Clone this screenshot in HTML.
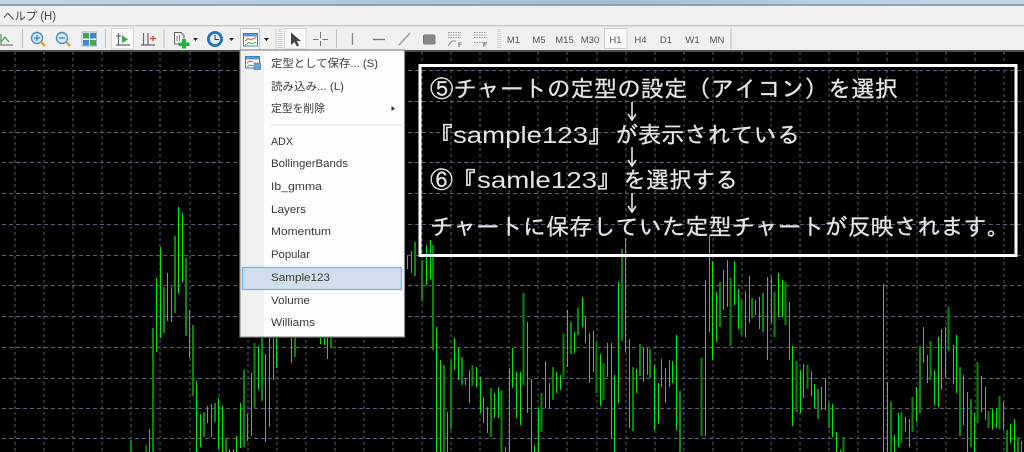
<!DOCTYPE html>
<html lang="ja">
<head>
<meta charset="utf-8">
<title>チャートの定型</title>
<style>
html,body{margin:0;padding:0;background:#000;width:1024px;height:452px;overflow:hidden}
svg{display:block}
.tb{font:9.5px "Liberation Sans",sans-serif;fill:#555}
.m{font:10.8px "Liberation Sans","Noto Sans CJK JP",sans-serif;fill:#3a3a3a}
.big{font-family:"IPAGothic","Noto Sans CJK JP",sans-serif;font-size:23px;fill:#e4e4e4;stroke:#e4e4e4;stroke-width:.3px}
.lat{font-family:"Liberation Sans",sans-serif;font-size:23px;fill:#e4e4e4}
</style>
</head>
<body>
<svg width="1024" height="452" viewBox="0 0 1024 452" xmlns="http://www.w3.org/2000/svg">
<defs>
<linearGradient id="ti" x1="0" x2="1" y1="0" y2="0">
<stop offset="0" stop-color="#c4d4e2"/><stop offset=".3" stop-color="#b4cbe0"/><stop offset=".6" stop-color="#a4bdd4"/><stop offset=".8" stop-color="#b8cfe4"/><stop offset="1" stop-color="#c4d6e6"/>
</linearGradient>
</defs>

<!-- chart -->
<rect x="0" y="52" width="1024" height="400" fill="#000"/>
<path fill="none" stroke="#566172" stroke-width="1" stroke-dasharray="3 3" d="M15 52V452M44 52V452M73 52V452M102 52V452M131 52V452M160 52V452M190 52V452M219 52V452M248 52V452M277 52V452M306 52V452M335 52V452M364 52V452M393 52V452M422 52V452M451 52V452M480 52V452M509 52V452M538 52V452M567 52V452M597 52V452M626 52V452M655 52V452M684 52V452M713 52V452M742 52V452M771 52V452M800 52V452M829 52V452M858 52V452M887 52V452M917 52V452M946 52V452M975 52V452M1004 52V452"/>
<path fill="none" stroke="#566172" stroke-width="1" stroke-dasharray="4 3" d="M2 70.5H1024M2 101.5H1024M2 132.5H1024M2 162.5H1024M2 193.5H1024M2 224.5H1024M2 255.5H1024M2 285.5H1024M2 316.5H1024M2 347.5H1024M2 378.5H1024M2 408.5H1024M2 438.5H1024"/>

<!-- dark bars -->
<path fill="none" stroke="#058a05" stroke-width="2" shape-rendering="crispEdges" d="M131 440V452M153 328V452M164 287V333M175 236V313M186 258V336M193 325V396M204 412V437M215 403V422M226 438V452M244 370V447M254.5 343V408M262 338V401M295 338V357M331 338V348M415 242V276M422 260V301M433 245V350M444 365V452M451 360V429M462 357V385M472.5 365V386M491 388V437M501.5 390V452M523.5 293V385M541.5 393V432M553 367V400M563.5 334V377M571 322V354M578 308V335M596.5 342V393M603.5 363V400M622 249V341M633 367V431M640 344V376M650 349V378M680 391V452M701.5 358V436M720 282V327M730.5 278V346M741.5 300V335M752 298V318M763 293V332M774.5 292V337M785.5 282V325M796.5 361V412M807.5 365V389M818 389V419M829 403V428M843.5 437V452M891 402V452M901.5 412V443M912.5 397V432M920 346V413M930.5 341V380M948.5 307V351M960 367V436M971 399V447M977.5 362V423M988.5 411V428M999.5 396V429M1007 430V452M1018 437V452"/>
<!-- bright bars -->
<path fill="none" stroke="#00ee00" stroke-width="1" shape-rendering="crispEdges" d="M146 445V452M149.5 429V452M156.5 278V352M160.500 247V338M167.5 273V321M171.5 287V322M178.5 207V294M182.500 213V282M189.5 310V358M196.5 381V452M200.5 414V447M207.5 406V423M211.500 404V437M218.5 398V449M222.500 406V452M229.5 449V452M233.500 449V452M236.5 436V452M240.5 403V448M247.5 414V441M251.500 373V436M258.5 346V390M265.5 354V442M269.5 338V427M273.500 338V380M276.5 338V368M291.500 338V363M320.500 338V344M324.500 338V345M327.5 338V359M407.500 255V269M411.500 251V273M426.500 245V285M430.500 240V279M436.5 327V452M440.5 360V452M447.5 412V452M454.5 338V370M458.5 348V380M465.5 378V385M469.500 370V403M476.5 367V387M480.500 377V413M483.5 397V423M487.500 407V433M494.5 393V418M498.500 387V418M505.500 447V452M509.500 368V452M512.500 348V388M516.500 372V418M520.500 372V425M527.5 322V413M531.500 379V452M534.500 445V452M538.500 408V452M545.5 361V408M549.500 383V408M556.500 372V393M560.500 375V390M567.500 310V367M574.500 332V353M582.500 297V327M585.5 317V343M589.500 333V383M593.500 331V372M600.500 354V406M607.5 343V377M611.500 343V438M614.5 375V452M618.5 282V403M625.5 238V352M629.500 339V428M636.5 369V393M643.5 347V382M647.500 348V375M654.5 365V430M658.500 383V424M661.5 359V387M665.5 368V403M669.500 360V387M672.5 361V383M676.500 335V430M705.500 280V436M709.500 236V332M712.5 261V360M716.500 292V342M723.5 270V310M727.500 260V307M734.500 261V305M738.500 289V329M745.500 291V337M749.500 276V323M755.5 300V315M759.5 297V329M767.500 277V360M771.500 277V323M778.500 273V317M782.500 280V317M789.500 302V360M792.500 346V426M800.500 370V413M803.5 364V398M811.500 371V396M814.5 384V408M821.5 387V410M825.5 378V410M832.5 404V437M836.5 432V452M840.500 450V452M883.500 284V452M887.5 382V452M894.5 435V452M898.500 413V447M905.500 417V432M909.500 419V447M916.500 387V422M923.5 327V363M927.500 355V383M934.5 370V405M938.500 337V407M941.5 329V390M945.5 327V378M953.500 345V384M956.5 335V393M963.5 375V425M967.500 392V452M974.500 413V452M981.5 376V412M985.500 387V420M992.500 409V430M996.500 408V428M1003.500 402V430M1010.5 424V443M1014.500 419V452M1021.500 441V452"/>

<!-- annotation frame -->
<rect x="420" y="65.5" width="596" height="190" fill="none" stroke="#fff" stroke-width="3"/>
<text class="big" x="430" y="97" textLength="468" lengthAdjust="spacingAndGlyphs">⑤チャートの定型の設定（アイコン）を選択</text>
<text class="big" x="430" y="143">『</text>
<text class="lat" x="453" y="143" textLength="135" lengthAdjust="spacingAndGlyphs">sample123</text>
<text class="big" x="588" y="143">』</text>
<text class="big" x="615" y="143" textLength="185" lengthAdjust="spacingAndGlyphs">が表示されている</text>
<text class="big" x="430" y="188">⑥</text>
<text class="big" x="453" y="188">『</text>
<text class="lat" x="477" y="188" textLength="120" lengthAdjust="spacingAndGlyphs">samle123</text>
<text class="big" x="597" y="188">』</text>
<text class="big" x="623" y="188" textLength="115" lengthAdjust="spacingAndGlyphs">を選択する</text>
<text class="big" x="430" y="235" textLength="580" lengthAdjust="spacingAndGlyphs">チャートに保存していた定型チャートが反映されます。</text>
<path fill="none" stroke="#e4e4e4" stroke-width="1.6" d="M632 102V120M628 114L632 120L636 114M632 147V166M628 160L632 166L636 160M632 193V212M628 206L632 212L636 206"/>

<!-- title sliver + menu bar + toolbar -->
<rect x="0" y="0" width="1024" height="5" fill="url(#ti)"/>
<rect x="0" y="4" width="1024" height="2" fill="#8fa3b6"/>
<rect x="0" y="6" width="1024" height="45" fill="#f0f0f0"/>
<rect x="0" y="25" width="1024" height="1.5" fill="#c9c9c9"/>
<rect x="0" y="50" width="1024" height="2" fill="#4a4a4a"/>
<text x="3" y="20" font-family="'Liberation Sans','Noto Sans CJK JP',sans-serif" font-size="11.5" fill="#444" textLength="53" lengthAdjust="spacingAndGlyphs">ヘルプ (H)</text>

<!-- toolbar separators -->
<path stroke="#c4c4c4" stroke-width="1.2" fill="none" d="M22.5 29V48M105.5 29V48M164 29V48M336.5 29V48M731 28V49"/>
<path stroke="#b8b8b8" stroke-width="1" stroke-dasharray="1 1" fill="none" d="M279 29V49M281 29V49M498 29V49M500 29V49"/>
<path stroke="#cfcfcf" stroke-width="1" fill="none" d="M276 29V49"/>

<!-- first partial icon -->
<path fill="none" stroke="#6b7f6b" stroke-width="1.2" d="M1 34V45H13"/>
<path fill="none" stroke="#3fa34f" stroke-width="1.2" d="M1 42L5 37L9 42"/>

<!-- zoom in -->
<circle cx="37" cy="38" r="5.5" fill="#d5e9f8" stroke="#4a8fc8" stroke-width="1.4"/>
<path stroke="#d9a93a" stroke-width="2.6" d="M41 42L45 46"/>
<path stroke="#2f7cc0" stroke-width="1.2" d="M34 38H40M37 35V41"/>
<!-- zoom out -->
<circle cx="62" cy="38" r="5.5" fill="#d5e9f8" stroke="#4a8fc8" stroke-width="1.4"/>
<path stroke="#d9a93a" stroke-width="2.6" d="M66 42L70 46"/>
<path stroke="#2f7cc0" stroke-width="1.2" d="M59 38H65"/>
<!-- tile -->
<rect x="82" y="32" width="14.5" height="14" fill="#fff" stroke="#6b8fae" stroke-width=".6"/>
<rect x="83" y="33" width="6" height="5.5" fill="#3fa64f"/><rect x="90" y="33" width="6" height="5.5" fill="#3f86cf"/>
<rect x="83" y="40" width="6" height="5.5" fill="#3f86cf"/><rect x="90" y="40" width="6" height="5.5" fill="#3fa64f"/>

<!-- axes buttons -->
<rect x="111.5" y="28.5" width="22" height="20.5" fill="#fafafa" stroke="#d6d6d6"/>
<path fill="none" stroke="#667" stroke-width="1.2" d="M118.5 33V45M116 45H130M116 36H121"/>
<path fill="#3aa84a" d="M122 35L128 39.5L122 43Z"/>
<path fill="none" stroke="#667" stroke-width="1.2" d="M143.5 33V45M141 45H155M148 33V45"/>
<path fill="none" stroke="#d2502f" stroke-width="1.4" d="M150 38.5H156M153 36V41"/>

<!-- new chart -->
<path fill="#f4f4f4" stroke="#666" stroke-width="1" d="M174.5 32.5H181L184 35.5V44H174.5Z"/>
<path fill="none" stroke="#888" d="M177 36V41M179.5 35V41"/>
<path fill="#22b33a" d="M182 39H186V42.5H189.5V46H186V48.5H182V46H178.5V42.5H182Z"/>
<path fill="#222" d="M193 38H198L195.5 41Z"/>
<!-- clock -->
<circle cx="215" cy="39" r="6.6" fill="#e8eef4" stroke="#2274bc" stroke-width="2.8"/>
<path fill="none" stroke="#335" stroke-width="1" d="M215 35V39.5H219"/>
<path fill="#222" d="M229 38H234L231.5 41Z"/>
<!-- template -->
<rect x="240.5" y="28.5" width="19" height="21.5" fill="#f7f7f7" stroke="#c8c8c8"/>
<rect x="243.5" y="33.5" width="14" height="12.5" fill="#fff" stroke="#3f7fb8"/>
<rect x="244" y="34" width="13" height="2.5" fill="#5a9ad4"/>
<path fill="none" stroke="#d2502f" d="M245 41L248 38.5L251 40L256 37.5"/>
<path fill="none" stroke="#3fa34f" d="M245 45L249 42.5L252 44L256 42"/>
<path fill="#222" d="M264 38H269L266.5 41Z"/>

<!-- cursor button -->
<rect x="284.5" y="28.5" width="21.5" height="20.5" fill="#fafafa" stroke="#d6d6d6"/>
<path fill="#444" d="M291 32.5L301 41H296.8L299 45.5L296.8 46.5L294.6 42L291 45Z"/>
<!-- crosshair -->
<path stroke="#777" stroke-width="1" fill="none" d="M320.5 32V38M320.5 41V46M313 39.5H318.5M322.5 39.5H328"/>
<!-- drawing -->
<path stroke="#8a8a8a" stroke-width="1.4" fill="none" d="M352.5 33V45"/>
<path stroke="#777" stroke-width="1.4" fill="none" d="M373 39.5H385"/>
<path stroke="#999" stroke-width="1.4" fill="none" d="M399 45L410 33"/>
<rect x="423.5" y="35" width="11.5" height="9" rx="1.5" fill="#888" stroke="#777"/>
<path stroke="#999" stroke-width="1" stroke-dasharray="1.5 1" fill="none" d="M448 32.5H461M448 35H461M448 37.5H461"/>
<path stroke="#888" stroke-width="1" fill="none" d="M448 46L452 41H456"/>
<text x="458" y="47" font-family="'Liberation Sans',sans-serif" font-size="6.5" font-weight="bold" fill="#666">F</text>
<path stroke="#999" stroke-width="1" stroke-dasharray="1.5 1" fill="none" d="M474 32.5H487M474 35H487M474 37.5H487M474 42.5H487"/>
<text x="483" y="47" font-family="'Liberation Sans',sans-serif" font-size="6.5" font-weight="bold" fill="#666">F</text>

<!-- timeframes -->
<rect x="604.5" y="28.5" width="22.5" height="20" fill="#f8f8f8" stroke="#cfcfcf"/>
<g class="tb" text-anchor="middle">
<text x="513.5" y="43">M1</text><text x="539" y="43">M5</text><text x="564.5" y="43">M15</text><text x="590" y="43">M30</text><text x="615.5" y="43">H1</text><text x="640.5" y="43">H4</text><text x="666" y="43">D1</text><text x="692.5" y="43">W1</text><text x="717" y="43">MN</text>
</g>

<!-- dropdown menu -->
<rect x="240" y="50" width="164.5" height="287" fill="#fdfdfd" stroke="#8a8a8a" stroke-width="1.2"/>
<rect x="241" y="51" width="23" height="285" fill="#f0f0f0"/>
<rect x="270" y="124.5" width="132" height="1.2" fill="#e6e6e6"/>
<rect x="242.5" y="267.5" width="159" height="22" fill="#d1dfec" stroke="#7db6ee" stroke-width="1.4"/>

<!-- menu icon -->
<rect x="245.5" y="56.5" width="14" height="11.5" fill="#fff" stroke="#3f7fb8"/>
<rect x="246" y="57" width="13" height="2.5" fill="#5a9ad4"/>
<path fill="none" stroke="#d2502f" d="M247 63L250 61L253 62"/>
<path fill="none" stroke="#3fa34f" d="M247 67L250 65L253 66"/>
<rect x="254" y="63" width="6.5" height="6.5" fill="#6fa0c8" stroke="#3f6f9f" stroke-width=".6"/>

<text class="m" x="271" y="67" textLength="107" lengthAdjust="spacingAndGlyphs">定型として保存... (S)</text>
<text class="m" x="271" y="90" textLength="73" lengthAdjust="spacingAndGlyphs">読み込み... (L)</text>
<text class="m" x="271" y="112" textLength="54" lengthAdjust="spacingAndGlyphs">定型を削除</text>
<path fill="#333" d="M391.5 106L395 108.5L391.5 111Z"/>
<text class="m" x="271" y="145" textLength="22" lengthAdjust="spacingAndGlyphs">ADX</text>
<text class="m" x="271" y="167" textLength="77" lengthAdjust="spacingAndGlyphs">BollingerBands</text>
<text class="m" x="271" y="190" textLength="51" lengthAdjust="spacingAndGlyphs">Ib_gmma</text>
<text class="m" x="271" y="213" textLength="35" lengthAdjust="spacingAndGlyphs">Layers</text>
<text class="m" x="271" y="235" textLength="60" lengthAdjust="spacingAndGlyphs">Momentum</text>
<text class="m" x="271" y="258" textLength="39" lengthAdjust="spacingAndGlyphs">Popular</text>
<text class="m" x="271" y="281" textLength="59" lengthAdjust="spacingAndGlyphs">Sample123</text>
<text class="m" x="271" y="304" textLength="39" lengthAdjust="spacingAndGlyphs">Volume</text>
<text class="m" x="271" y="326" textLength="44" lengthAdjust="spacingAndGlyphs">Williams</text>
</svg>
</body>
</html>
